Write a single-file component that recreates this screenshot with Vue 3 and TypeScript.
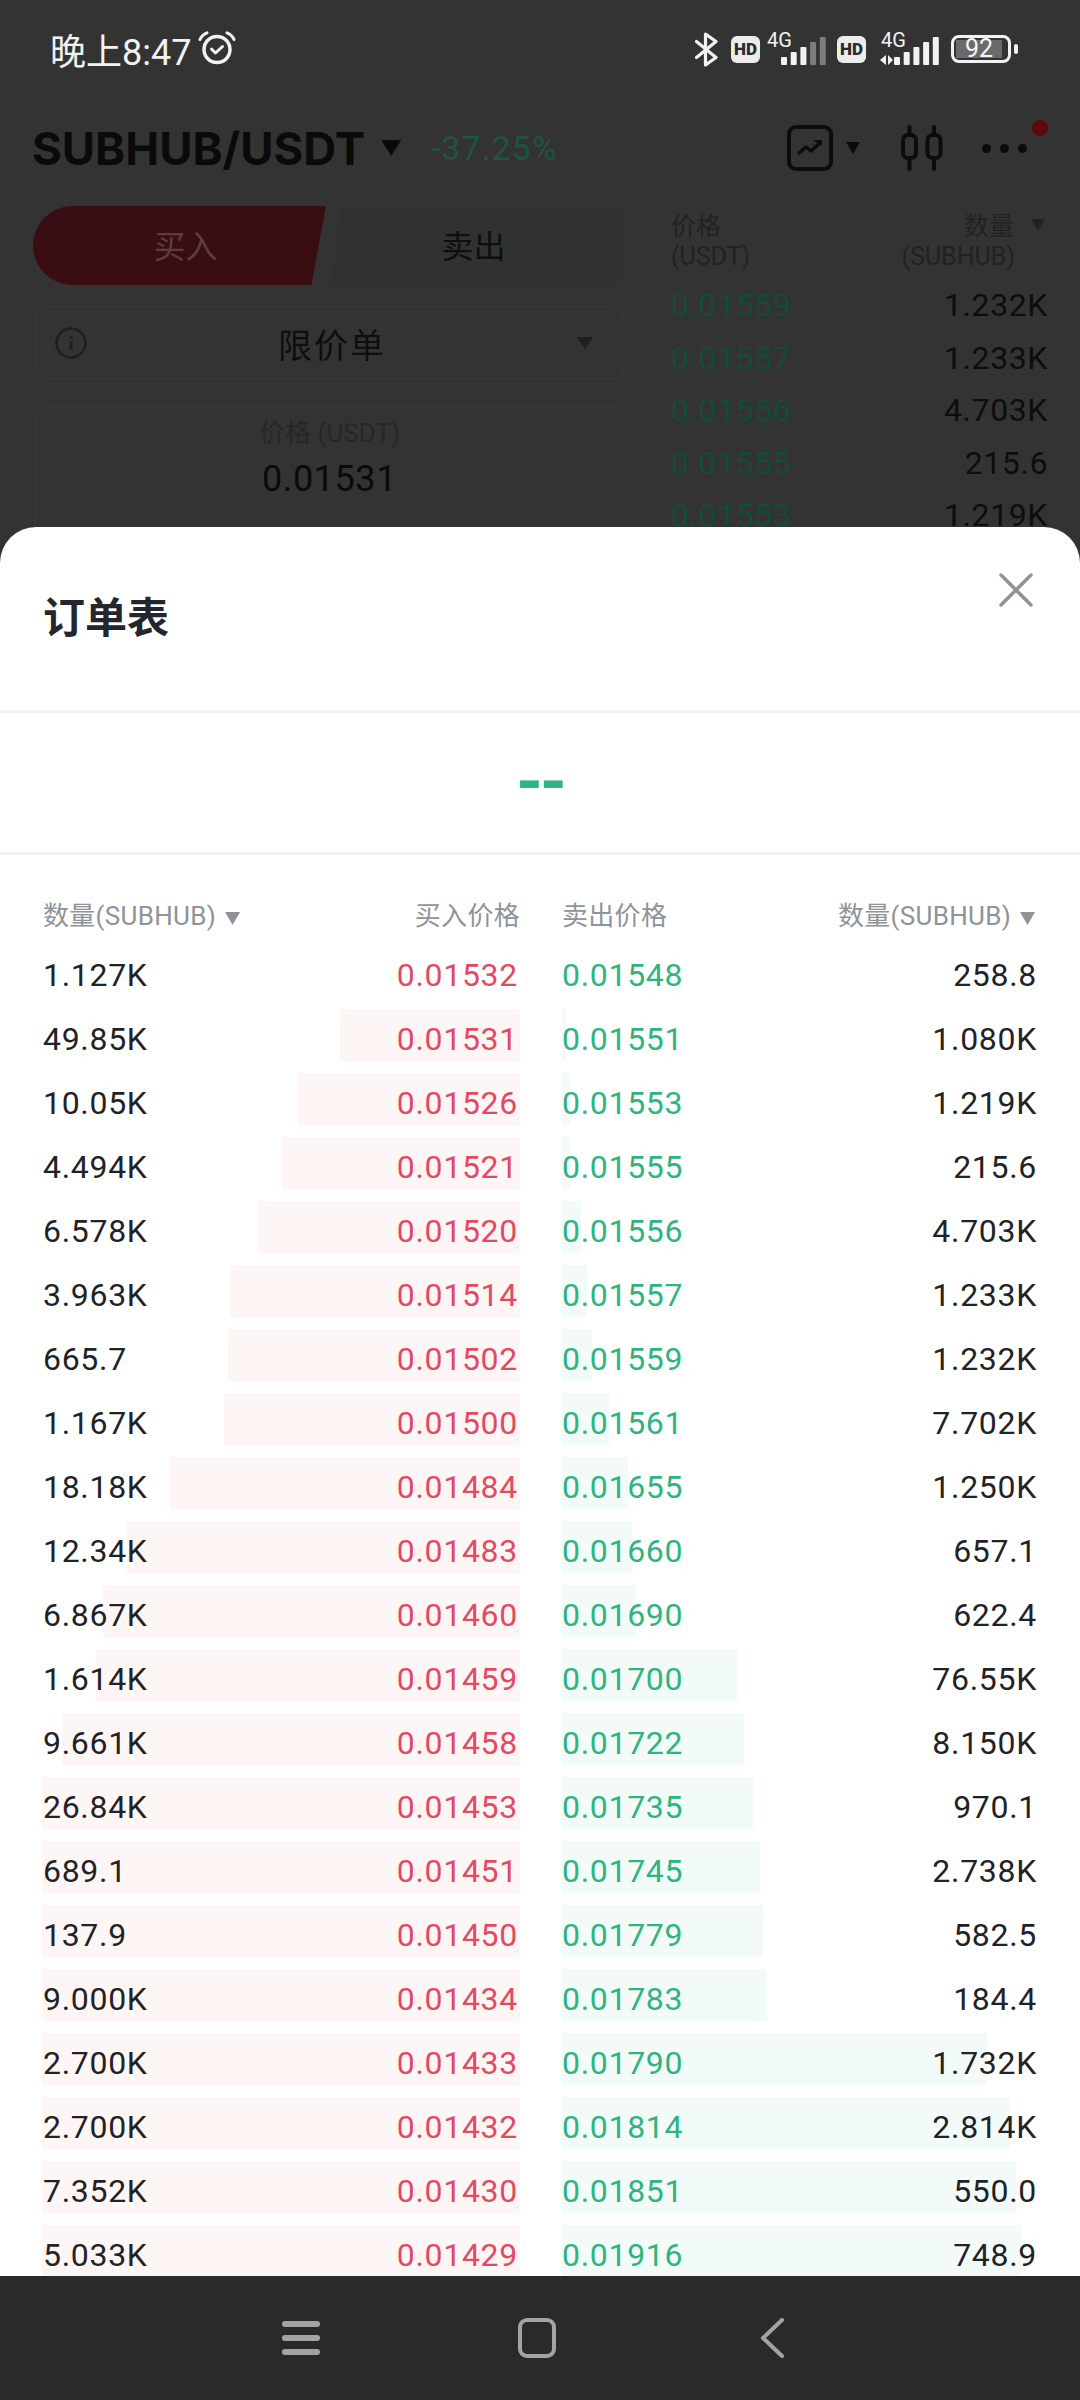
<script setup lang="ts">
interface BookRow {
  bidQty: string
  bid: string
  bidBar: number
  ask: string
  askQty: string
  askBar: number
}

// [bid qty, bid price, bar width, ask price, ask qty, bar width]
const raw: [string, string, number, string, string, number][] = [
  ['1.127K', '0.01532', 0, '0.01548', '258.8', 0],
  ['49.85K', '0.01531', 180, '0.01551', '1.080K', 4],
  ['10.05K', '0.01526', 222, '0.01553', '1.219K', 8],
  ['4.494K', '0.01521', 238, '0.01555', '215.6', 8],
  ['6.578K', '0.01520', 262, '0.01556', '4.703K', 19],
  ['3.963K', '0.01514', 290, '0.01557', '1.233K', 25],
  ['665.7', '0.01502', 292, '0.01559', '1.232K', 30],
  ['1.167K', '0.01500', 296, '0.01561', '7.702K', 47],
  ['18.18K', '0.01484', 350, '0.01655', '1.250K', 66],
  ['12.34K', '0.01483', 393, '0.01660', '657.1', 70],
  ['6.867K', '0.01460', 417, '0.01690', '622.4', 74],
  ['1.614K', '0.01459', 424, '0.01700', '76.55K', 175],
  ['9.661K', '0.01458', 458, '0.01722', '8.150K', 182],
  ['26.84K', '0.01453', 478, '0.01735', '970.1', 191],
  ['689.1', '0.01451', 478, '0.01745', '2.738K', 198],
  ['137.9', '0.01450', 478, '0.01779', '582.5', 201],
  ['9.000K', '0.01434', 478, '0.01783', '184.4', 205],
  ['2.700K', '0.01433', 478, '0.01790', '1.732K', 425],
  ['2.700K', '0.01432', 478, '0.01814', '2.814K', 448],
  ['7.352K', '0.01430', 478, '0.01851', '550.0', 454],
  ['5.033K', '0.01429', 478, '0.01916', '748.9', 459],
]

const rows: BookRow[] = raw.map(([bidQty, bid, bidBar, ask, askQty, askBar]) => ({
  bidQty,
  bid,
  bidBar,
  ask,
  askQty,
  askBar,
}))

const miniBook: [string, string][] = [
  ['0.01559', '1.232K'],
  ['0.01557', '1.233K'],
  ['0.01556', '4.703K'],
  ['0.01555', '215.6'],
  ['0.01553', '1.219K'],
]

const signalBars = [8, 13, 18, 23, 28]
</script>

<template>
  <div class="screen">
    <div class="page">
      <div class="status-bar">
        <div class="status-left">
          <span class="clock">晚上8:47</span>
          <svg class="alarm" width="38" height="34" viewBox="0 0 38 34" fill="none" stroke="#f2f2f2">
            <circle cx="19" cy="18.5" r="13" stroke-width="3.5" />
            <path d="M13.5 18l4 4 7-6.5" stroke-width="3" stroke-linecap="round" stroke-linejoin="round" />
            <path d="M2 8.5C3.5 5 6 3 9 1.8M36 8.5C34.500 5 32 3 29 1.800" stroke-width="3" stroke-linecap="round" />
          </svg>
        </div>
        <div class="status-right">
          <svg width="23" height="35" viewBox="0 0 23 35" fill="none" stroke="#f2f2f2" stroke-width="3.200">
            <path d="M1.500 9.500L21 25.500 10.500 33V2L21 9.500 1.500 25.500" stroke-linejoin="round" stroke-linecap="round" />
          </svg>
          <span class="hd">HD</span>
          <div class="signal signal--first">
            <span class="net">4G</span>
            <svg width="46" height="28" viewBox="0 0 46 28">
              <rect
                v-for="(h, i) in signalBars"
                :key="i"
                :x="i * 9.700"
                :y="28 - h"
                width="6"
                :height="h"
                rx="1"
                :fill="i > 2 ? '#7d7d7d' : '#f2f2f2'"
              />
            </svg>
          </div>
          <span class="hd">HD</span>
          <div class="signal signal--second">
            <span class="net">4G</span>
            <svg class="updown" width="14" height="10" viewBox="0 0 14 10" fill="#f2f2f2">
              <path d="M6 0v10L0 5zM8 0l5 5-5 5z" />
            </svg>
            <svg width="46" height="28" viewBox="0 0 46 28">
              <rect v-for="(h, i) in signalBars" :key="i" :x="i * 9.700" :y="28 - h" width="6" :height="h" rx="1" fill="#f2f2f2" />
            </svg>
          </div>
          <div class="battery">
            <div class="battery-body"><span class="battery-fill">92</span></div>
            <div class="battery-nub"></div>
          </div>
        </div>
      </div>

      <div class="market-bar">
        <span class="pair">SUBHUB/USDT</span>
        <span class="tri tri--pair"></span>
        <span class="change">-37.25%</span>
        <div class="market-tools">
          <svg width="46" height="46" viewBox="0 0 46 46" fill="none" stroke="#0c0c0c">
            <rect x="2" y="2" width="42" height="42" rx="7" stroke-width="4" />
            <path d="M11 29l8-7 5 4 10-9" stroke-width="3.500" stroke-linejoin="round" />
            <path d="M26 15h9v6z" fill="#0c0c0c" stroke="none" />
          </svg>
          <span class="tri tri--tool"></span>
          <svg class="candles" width="42" height="46" viewBox="0 0 42 46" fill="none" stroke="#0c0c0c" stroke-width="4" stroke-linecap="round">
            <path d="M8.500 2v8M8.500 33v11M33 2v8M33 33v11" />
            <rect x="2" y="10" width="13" height="23" rx="5" />
            <rect x="26.500" y="10" width="13" height="23" rx="5" />
          </svg>
          <div class="more">
            <i></i><i></i><i></i>
            <span class="more-dot"></span>
          </div>
        </div>
      </div>

      <div class="trade">
        <div class="form">
          <div class="side-switch">
            <div class="side side--buy">买入</div>
            <div class="side side--sell">卖出</div>
          </div>
          <div class="order-type">
            <svg width="32" height="32" viewBox="0 0 32 32" fill="none" stroke="#1c2020" stroke-width="2.500">
              <circle cx="16" cy="16" r="14.500" />
              <path d="M16 14v9M16 9v2.500" stroke-width="3" />
            </svg>
            <span class="order-label">限价单</span>
            <span class="tri tri--select"></span>
          </div>
          <div class="price-box">
            <span class="price-label">价格 (USDT)</span>
            <span class="price-value">0.01531</span>
          </div>
        </div>
        <div class="mini-book">
          <div class="mini-head">
            <div>
              <div>价格</div>
              <div>(USDT)</div>
            </div>
            <div class="mini-head-right">
              <div>数量<span class="tri tri--mini"></span></div>
              <div class="mini-unit">(SUBHUB)</div>
            </div>
          </div>
          <div v-for="row in miniBook" :key="row[0]" class="mini-row">
            <span class="mini-price">{{ row[0] }}</span>
            <span>{{ row[1] }}</span>
          </div>
        </div>
      </div>

      <div class="sheet">
        <div class="sheet-head">
          <h2 class="sheet-title">订单表</h2>
          <svg width="34" height="34" viewBox="0 0 34 34" stroke="#8f9296" stroke-width="3.500" stroke-linecap="round">
            <path d="M2 2l30 30M32 2L2 32" />
          </svg>
        </div>
        <div class="last-price">--</div>
        <div class="book-head">
          <div class="head-cell">
            <span>数量(SUBHUB)<span class="tri tri--head"></span></span>
            <span>买入价格</span>
          </div>
          <div class="head-cell">
            <span>卖出价格</span>
            <span class="head-qty">数量(SUBHUB)<span class="tri tri--head"></span></span>
          </div>
        </div>
        <div v-for="(row, i) in rows" :key="i" class="book-row">
          <div class="book-cell">
            <div v-if="row.bidBar" class="depth depth--bid" :style="{ width: `${row.bidBar}px` }"></div>
            <span class="qty">{{ row.bidQty }}</span>
            <span class="bid">{{ row.bid }}</span>
          </div>
          <div class="book-cell">
            <div v-if="row.askBar" class="depth depth--ask" :style="{ width: `${row.askBar}px` }"></div>
            <span class="ask">{{ row.ask }}</span>
            <span class="qty">{{ row.askQty }}</span>
          </div>
        </div>
      </div>
    </div>

    <div class="nav-bar">
      <div class="nav-menu"><i></i><i></i><i></i></div>
      <div class="nav-home"></div>
      <svg width="25" height="40" viewBox="0 0 25 40" fill="none" stroke="#a3a3a3" stroke-width="4" stroke-linecap="round" stroke-linejoin="round">
        <path d="M22 2L3 20l19 18" />
      </svg>
    </div>
  </div>
</template>

<style>
html,
body {
  margin: 0;
  background: #333;
}
</style>

<style scoped>
.screen {
  width: 1080px;
  height: 2400px;
  display: flex;
  flex-direction: column;
  overflow: hidden;
  font-family: Roboto, "Noto Sans CJK SC", sans-serif;
  background: #333;
}

.page {
  position: relative;
  flex: 1;
  overflow: hidden;
}

.status-bar {
  height: 98px;
  display: flex;
  align-items: center;
  justify-content: space-between;
  padding: 0 62px 0 50px;
  color: #f2f2f2;
}

.status-left {
  display: flex;
  align-items: center;
  gap: 7px;
}

.clock {
  font-size: 36px;
}

.alarm {
  margin-top: -2px;
}

.status-right {
  display: flex;
  align-items: center;
  gap: 13px;
}

.hd {
  width: 29px;
  height: 27px;
  margin-top: 1px;
  border-radius: 6px;
  background: #ececec;
  color: #2b2b2b;
  font-size: 17px;
  font-weight: 900;
  line-height: 27px;
  text-align: center;
}

.signal {
  position: relative;
  width: 60px;
  height: 32px;
  display: flex;
  justify-content: flex-end;
  align-items: flex-end;
}

.signal--first {
  margin-left: -8px;
  margin-right: -1px;
}

.signal--second {
  width: 58px;
  margin-left: 1px;
}

.net {
  position: absolute;
  left: 2px;
  top: -3px;
  font-size: 20px;
  line-height: 20px;
}

.signal--second .net {
  left: 1px;
}

.updown {
  position: absolute;
  left: 0;
  bottom: 0;
}

.signal svg:last-child {
  margin-right: -2px;
}

.battery {
  display: flex;
  align-items: center;
  gap: 3px;
}

.battery-body {
  width: 60px;
  height: 28px;
  box-sizing: border-box;
  border: 3px solid #f2f2f2;
  border-radius: 8px;
  padding: 2px;
}

.battery-fill {
  display: block;
  width: 46px;
  height: 18px;
  background: #6a6a6a;
  color: #f5f5f5;
  font-size: 25px;
  line-height: 18px;
  text-align: center;
}

.battery-nub {
  width: 4px;
  height: 10px;
  border-radius: 2px;
  background: #f2f2f2;
}

.tri {
  display: inline-block;
  clip-path: polygon(0 0, 100% 0, 50% 100%);
}

.tri--pair {
  width: 20px;
  height: 16px;
  margin: 0 30px 0 16px;
  background: #0a0a0a;
}

.tri--tool {
  width: 14px;
  height: 12px;
  margin: 0 41px 0 13px;
  background: #0a0a0a;
}

.tri--select {
  width: 16px;
  height: 12px;
  background: #1f1f1f;
}

.tri--mini {
  width: 14px;
  height: 12px;
  margin: 0 3px 4px 17px;
  background: #222;
}

.tri--head {
  width: 15px;
  height: 13px;
  margin-left: 9px;
  background: #8f9397;
}

.market-bar {
  height: 100px;
  display: flex;
  align-items: center;
  padding: 0 53px 0 32px;
}

.pair {
  color: #0a0a0a;
  font-family: Inter, Roboto, sans-serif;
  font-size: 45.500px;
  font-weight: 700;
}

.change {
  color: #1d5541;
  font-size: 33px;
  letter-spacing: 1.5px;
}

.market-tools {
  margin-left: auto;
  display: flex;
  align-items: center;
}

.more {
  position: relative;
  display: flex;
  gap: 9px;
  margin-left: 39px;
}

.more i {
  width: 9px;
  height: 9px;
  border-radius: 50%;
  background: #0c0c0c;
}

.more-dot {
  position: absolute;
  right: -21px;
  top: -24px;
  width: 16px;
  height: 16px;
  border-radius: 50%;
  background: #5e0a10;
}

.trade {
  display: flex;
  gap: 46px;
  padding: 8px 32px 0 34px;
}

.form {
  width: 591px;
  flex-shrink: 0;
}

.side-switch {
  display: flex;
  gap: 6px;
  margin-left: -1px;
  height: 79px;
}

.side {
  width: 294px;
  box-sizing: border-box;
  font-size: 32px;
  line-height: 83px;
  text-align: center;
}

.side--buy {
  padding-left: 12px;
  border-radius: 40px 0 0 40px;
  background: #3a0d12;
  color: #5c3d3f;
  clip-path: polygon(0 0, 100% 0, 95% 100%, 0 100%);
}

.side--sell {
  padding-right: 10px;
  border-radius: 0 20px 20px 0;
  background: #303232;
  color: #0e0e0e;
  clip-path: polygon(3% 0, 100% 0, 100% 100%, 0 100%);
}

.order-type {
  position: relative;
  height: 74px;
  margin-top: 21px;
  box-sizing: border-box;
  display: flex;
  align-items: center;
  justify-content: space-between;
  padding: 0 30px 0 19px;
  border: 2px solid #363737;
  border-radius: 14px;
}

.order-label {
  color: #0e0e0e;
  font-size: 34px;
  letter-spacing: 2px;
}

.price-box {
  height: 150px;
  margin-top: 25px;
  box-sizing: border-box;
  display: flex;
  flex-direction: column;
  align-items: center;
  padding-top: 8px;
  border: 2px solid #363737;
  border-radius: 14px;
}

.price-label {
  color: #262727;
  font-size: 26px;
  line-height: 36px;
}

.price-value {
  margin-top: 6px;
  color: #0a0a0a;
  font-size: 36px;
  letter-spacing: 0.6px;
  line-height: 44px;
}

.mini-book {
  flex: 1;
  padding-top: 6px;
}

.mini-head {
  display: flex;
  justify-content: space-between;
  height: 67px;
  color: #222;
  font-size: 25px;
  line-height: 30px;
}

.mini-head-right {
  text-align: right;
}

.mini-unit {
  margin-right: 33px;
}

.mini-row {
  display: flex;
  justify-content: space-between;
  height: 52.600px;
  color: #0d0d0d;
  font-size: 32px;
  letter-spacing: 0.6px;
  line-height: 52px;
}

.mini-price {
  color: #134a38;
}

.sheet {
  position: absolute;
  left: 0;
  right: 0;
  top: 527px;
  bottom: 0;
  overflow: hidden;
  background: #fff;
  border-radius: 36px 36px 0 0;
}

.sheet-head {
  height: 186px;
  box-sizing: border-box;
  display: flex;
  align-items: flex-start;
  justify-content: space-between;
  padding: 46px 47px 0 43px;
  border-bottom: 3px solid #f0f1f2;
}

.sheet-title {
  margin: 0;
  color: #23262d;
  font-size: 42px;
  font-weight: 700;
  line-height: 92px;
}

.last-price {
  height: 142px;
  box-sizing: border-box;
  border-bottom: 3px solid #f0f1f2;
  color: #2eb67f;
  font-size: 68px;
  font-weight: 700;
  letter-spacing: -3px;
  line-height: 139px;
  text-align: center;
}

.book-head {
  display: grid;
  grid-template-columns: 477px 475px;
  column-gap: 42px;
  height: 88px;
  box-sizing: border-box;
  padding: 41px 0 7px 43px;
  color: #8f9397;
  font-size: 26px;
  letter-spacing: 0.3px;
  line-height: 40px;
}

.head-cell {
  display: flex;
  justify-content: space-between;
}

.head-qty {
  margin-right: 2px;
}

.book-row {
  display: grid;
  grid-template-columns: 477px 475px;
  column-gap: 42px;
  height: 64px;
  padding-left: 43px;
  font-size: 32px;
  letter-spacing: 0.7px;
  line-height: 64px;
}

.book-cell {
  position: relative;
  display: flex;
  justify-content: space-between;
}

.book-cell span {
  position: relative;
}

.depth {
  position: absolute;
  top: 2px;
  height: 52px;
}

.depth--bid {
  right: 0;
  background: #fef5f5;
}

.depth--ask {
  left: 0;
  background: #f3fbf8;
}

.qty {
  color: #1f2226;
}

.bid {
  margin-right: 2px;
  color: #e04b62;
}

.ask {
  color: #2fb47f;
}

.nav-bar {
  height: 124px;
  box-sizing: border-box;
  flex-shrink: 0;
  display: flex;
  align-items: center;
  padding-left: 282px;
  background: #2a2a2a;
}

.nav-menu {
  width: 38px;
  display: flex;
  flex-direction: column;
  gap: 8px;
}

.nav-menu i {
  height: 6px;
  border-radius: 3px;
  background: #a3a3a3;
}

.nav-home {
  width: 38px;
  height: 40px;
  box-sizing: border-box;
  margin: 0 204px 0 198px;
  border: 4px solid #a3a3a3;
  border-radius: 9px;
}
</style>
